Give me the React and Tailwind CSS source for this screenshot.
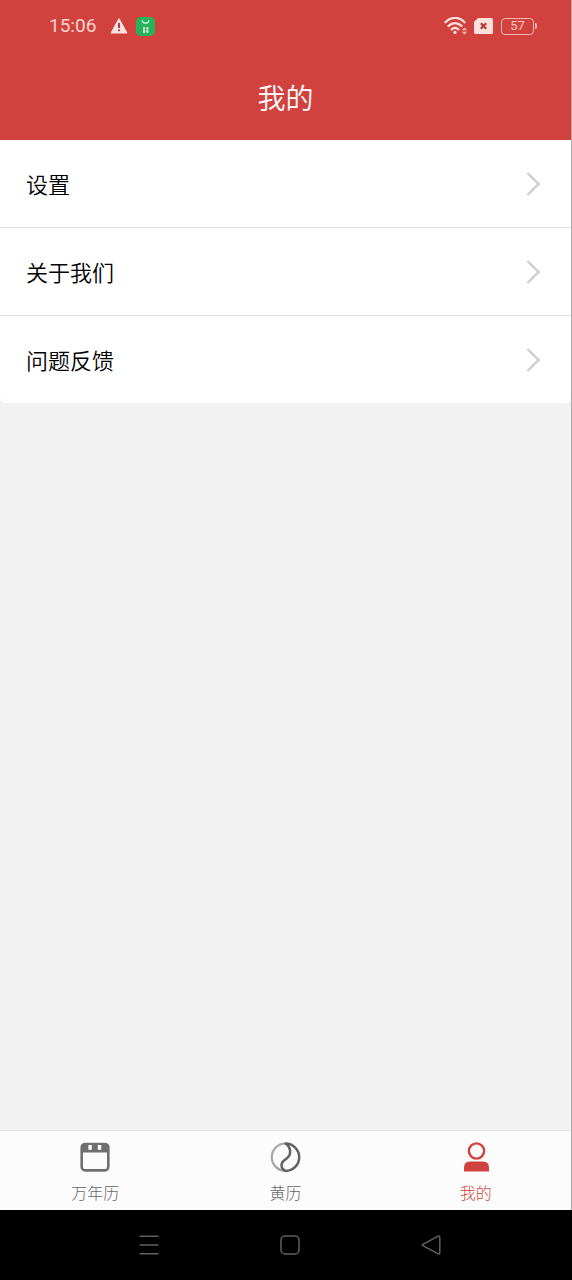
import React from "react";

const menuItems = ["设置", "关于我们", "问题反馈"];

function StatusBar() {
  return (
    <div className="flex h-[52px] items-center justify-between pr-[34px] pl-[49px] text-[#fbd5d1]">
      <div className="flex items-center">
        <time className="font-['Roboto','Noto_Sans',sans-serif] text-[19px] leading-6">15:06</time>
        <svg className="ml-3.5 h-[18px] w-[18px]" viewBox="0 0 18 18" aria-hidden="true">
          <path d="M9 2 L16.6 15.8 H1.4 Z" fill="#fde3df" stroke="#fde3df" strokeWidth="1.4" strokeLinejoin="round" />
          <path d="M9 6v5" stroke="#b23a3c" strokeWidth="2" />
          <circle cx="9" cy="13.3" r="1.1" fill="#b23a3c" />
        </svg>
        <svg className="ml-2 h-[19px] w-[19px]" viewBox="0 0 19 19" aria-hidden="true">
          <rect width="19" height="19" rx="5" fill="#28b35a" />
          <path d="M6.2 3.6c.4 3.4 6.2 3.4 6.6 0" fill="none" stroke="#c9f5d5" strokeWidth="1.3" strokeLinecap="round" />
          <path d="M8.1 10.2v5.6M11.4 10.2v5.6" stroke="#e3fbe9" strokeWidth="2" />
          <path d="M6.5 12.8h7" stroke="#28b35a" strokeWidth=".6" />
        </svg>
      </div>
      <div className="flex items-center">
        <svg className="h-[18px] w-6" viewBox="0 0 24 18" aria-hidden="true">
          <g fill="none" stroke="#fde0dc" strokeWidth="2.3" strokeLinecap="round">
            <path d="M1.4 5.2C7-.6 15-.6 20.600 5.2" />
            <path d="M4.500 8.900c3.900-3.800 9.100-3.800 13 0" />
            <path d="M7.700 12.400c2.200-2 4.400-2 6.600 0" />
          </g>
          <circle cx="11" cy="15.400" r="1.600" fill="#fde0dc" />
          <path d="M17.800 13.200 20.400 10.600 23 13.200ZM17.800 14.800H23L20.400 17.400Z" fill="#f7bfba" />
        </svg>
        <svg className="ml-1.5 h-4 w-[19px]" viewBox="0 0 19 16" aria-hidden="true">
          <path d="M4 0h13.5Q19 0 19 1.5v13q0 1.5-1.5 1.5h-16Q0 16 0 14.5V4Z" fill="#fde0dc" />
          <path d="m6.8 5.3 5.4 5.4m0-5.4-5.4 5.4" stroke="#b13a3c" strokeWidth="2.2" />
        </svg>
        <div className="ml-2 flex h-[17px] w-[33px] items-center justify-center rounded border border-[#f5b5b0] font-['Roboto',sans-serif] text-[13px] leading-4 text-[#f9c6c1]">
          57
        </div>
        <div className="ml-px h-1.5 w-0.5 rounded-r-sm bg-[#f5b5b0]" />
      </div>
    </div>
  );
}

function CalendarIcon() {
  return (
    <svg className="h-8 w-8" viewBox="0 0 32 32" aria-hidden="true">
      <rect x="2.7" y="3" width="26.6" height="26.4" rx="3.5" fill="none" stroke="#6f6f6f" strokeWidth="2.6" />
      <path d="M2.7 11.5V6.5Q2.7 3 6.2 3h19.6Q29.3 3 29.3 6.5v5Z" fill="#6f6f6f" />
      <path d="M9.4 4h3.4v4.8H9.4zM18.8 4h3.4v4.8h-3.4z" fill="#fff" />
    </svg>
  );
}

function TaijiIcon() {
  return (
    <svg className="h-8 w-8" viewBox="0 0 32 32" aria-hidden="true">
      <g fill="none">
        <path d="M16.5 2.5a13.7 13.7 0 0 0 0 27.4" stroke="#a6a6a6" strokeWidth="2.2" />
        <path d="M16.500 2.500a13.700 13.700 0 0 1 0 27.400c-4.400-1.700-5.400-7-1.800-10.200c2.600-2 5.600-3.600 6.200-6.600c.8-4.200-.8-8.200-4.400-10.600Z" stroke="#626262" strokeWidth="2.500" strokeLinejoin="round" />
      </g>
    </svg>
  );
}

function PersonIcon() {
  return (
    <svg className="h-8 w-8" viewBox="0 0 32 32" aria-hidden="true">
      <circle cx="16.5" cy="10" r="7.6" fill="none" stroke="#d1423e" strokeWidth="2.4" />
      <path d="M4 30.500V26.500Q4 20.500 10 20.500H23Q29 20.500 29 26.500V30.500Z" fill="#d1423e" />
    </svg>
  );
}

const tabs = [
  { label: "万年历", Icon: CalendarIcon },
  { label: "黄历", Icon: TaijiIcon },
  { label: "我的", Icon: PersonIcon, active: true },
];

export default function App() {
  return (
    <div className="flex min-h-screen flex-col bg-black font-['Noto_Sans_CJK_SC',sans-serif]">
      <div className="flex flex-1 flex-col border-r border-[#a9a9a9] bg-[#f2f2f2]">
        <header className="bg-[#d1423e]">
          <StatusBar />
          <div className="flex h-[88px] items-center justify-center pt-0.5">
            <h1 className="text-[28px] leading-10 font-[350] text-white">我的</h1>
          </div>
        </header>

        <main className="flex-1">
          <ul className="divide-y divide-[#e0e0e0] overflow-hidden rounded-b-md bg-white">
            {menuItems.map((label) => (
              <li key={label}>
                <button type="button" className="flex h-[87px] w-full items-center justify-between pr-[30px] pl-[26px] text-left text-[22px] leading-8 font-[350] text-black">
                  <span className="pb-0.5">{label}</span>
                  <svg className="h-[26px] w-4" viewBox="0 0 16 26" fill="none" aria-hidden="true">
                    <path d="M2.5 2 13.5 13 2.5 24" stroke="#cdcdcd" strokeWidth="2.4" />
                  </svg>
                </button>
              </li>
            ))}
          </ul>
        </main>

        <nav className="grid h-20 grid-cols-3 border-t border-[#e4e4e4] bg-[#fcfcfc]">
          {tabs.map(({ label, Icon, active }) => (
            <button
              key={label}
              type="button"
              aria-current={active ? "page" : undefined}
              className={`flex flex-col items-center pt-2.5 text-base leading-6 font-light ${active ? "text-[#d64a3c]" : "text-[#666666]"}`}
            >
              <Icon />
              <span className="mt-[7px]">{label}</span>
            </button>
          ))}
        </nav>
      </div>

      <div className="grid h-[70px] grid-cols-3 items-center justify-items-center pr-[71px] pl-[78px] text-[#606060]">
        <button type="button" aria-label="最近任务">
          <svg className="h-5 w-5" viewBox="0 0 20 20" fill="none" stroke="currentColor" strokeWidth="1.5" aria-hidden="true">
            <path d="M.5 1.2h19M.5 10h19M.5 18.8h19" />
          </svg>
        </button>
        <button type="button" aria-label="主屏幕">
          <svg className="h-5 w-5" viewBox="0 0 20 20" fill="none" stroke="currentColor" strokeWidth="1.5" aria-hidden="true">
            <rect x="1" y="1" width="18" height="18" rx="4" />
          </svg>
        </button>
        <button type="button" aria-label="返回">
          <svg className="h-5 w-5" viewBox="0 0 20 20" fill="none" stroke="currentColor" strokeWidth="1.5" strokeLinejoin="round" aria-hidden="true">
            <path d="M1.8 9.3 16.8 1.3Q18.8.6 18.8 2.6V17.4Q18.8 19.4 16.8 18.7L1.8 10.7Q.6 10 1.8 9.3Z" />
          </svg>
        </button>
      </div>
    </div>
  );
}
